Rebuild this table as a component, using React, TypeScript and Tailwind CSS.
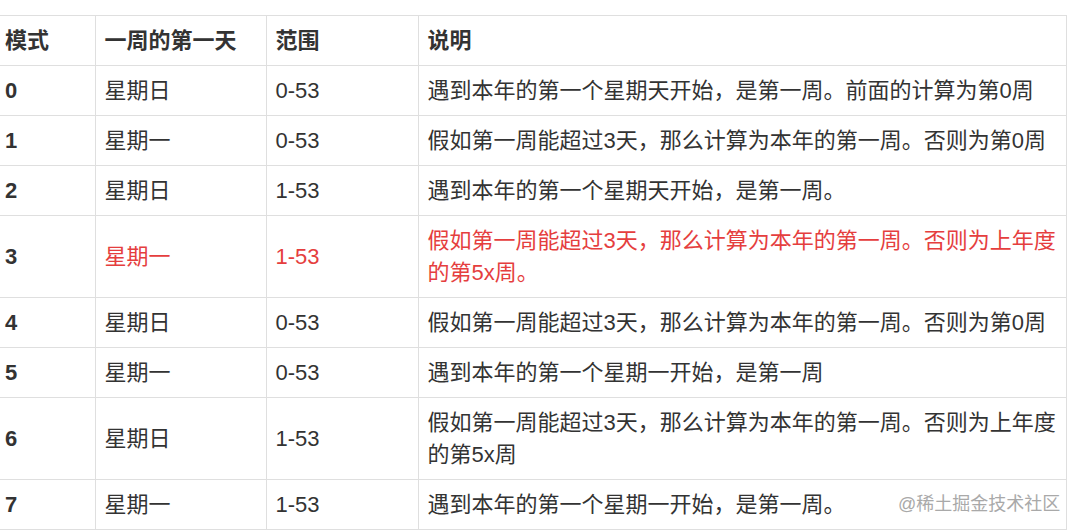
const rows: { mode: string; day: string; range: string; desc: string[]; red?: boolean }[] = [
  { mode: "0", day: "星期日", range: "0-53", desc: ["遇到本年的第一个星期天开始，是第一周。前面的计算为第0周"] },
  { mode: "1", day: "星期一", range: "0-53", desc: ["假如第一周能超过3天，那么计算为本年的第一周。否则为第0周"] },
  { mode: "2", day: "星期日", range: "1-53", desc: ["遇到本年的第一个星期天开始，是第一周。"] },
  {
    mode: "3",
    day: "星期一",
    range: "1-53",
    desc: ["假如第一周能超过3天，那么计算为本年的第一周。否则为上年度", "的第5x周。"],
    red: true,
  },
  { mode: "4", day: "星期日", range: "0-53", desc: ["假如第一周能超过3天，那么计算为本年的第一周。否则为第0周"] },
  { mode: "5", day: "星期一", range: "0-53", desc: ["遇到本年的第一个星期一开始，是第一周"] },
  {
    mode: "6",
    day: "星期日",
    range: "1-53",
    desc: ["假如第一周能超过3天，那么计算为本年的第一周。否则为上年度", "的第5x周"],
  },
  { mode: "7", day: "星期一", range: "1-53", desc: ["遇到本年的第一个星期一开始，是第一周。"] },
];

export default function App() {
  return (
    <div
      className="relative h-[532px] w-[1077px] overflow-hidden bg-white pt-[15px] text-[#333]"
      style={{ fontFamily: '"Liberation Sans", "Noto Sans CJK SC", sans-serif' }}
    >
      <table className="w-[1067px] table-fixed border-collapse text-[22px] leading-[32px]">
        <colgroup>
          <col className="w-[95px]" />
          <col className="w-[171px]" />
          <col className="w-[152px]" />
          <col />
        </colgroup>
        <thead>
          <tr className="border-y border-[#dfdfdf]">
            <th className="pt-[9px] pb-[8px] pl-[5px] text-left font-bold">模式</th>
            <th className="border-l border-[#dfdfdf] px-[9px] pt-[9px] pb-[8px] text-left font-bold">一周的第一天</th>
            <th className="border-l border-[#dfdfdf] px-[9px] pt-[9px] pb-[8px] text-left font-bold">范围</th>
            <th className="border-x border-[#dfdfdf] px-[9px] pt-[9px] pb-[8px] text-left font-bold">说明</th>
          </tr>
        </thead>
        <tbody>
          {rows.map((r) => (
            <tr key={r.mode} className="border-b border-[#dfdfdf]">
              <td className="pt-[9px] pb-[8px] pl-[5px] font-bold">{r.mode}</td>
              <td className={`border-l border-[#dfdfdf] px-[9px] pt-[9px] pb-[8px] ${r.red ? "text-[#e53e3e]" : ""}`}>
                {r.day}
              </td>
              <td className={`border-l border-[#dfdfdf] px-[9px] pt-[9px] pb-[8px] ${r.red ? "text-[#e53e3e]" : ""}`}>
                {r.range}
              </td>
              <td className={`border-x border-[#dfdfdf] px-[9px] pt-[9px] pb-[8px] ${r.red ? "text-[#e53e3e]" : ""}`}>
                {r.desc.map((line, i) => (
                  <div key={i} className="whitespace-nowrap">
                    {line}
                  </div>
                ))}
              </td>
            </tr>
          ))}
        </tbody>
      </table>

      {/* watermark */}
      <div className="absolute left-[898px] top-[491px] text-[18px] text-[#a9a9a9]">@稀土掘金技术社区</div>
    </div>
  );
}
